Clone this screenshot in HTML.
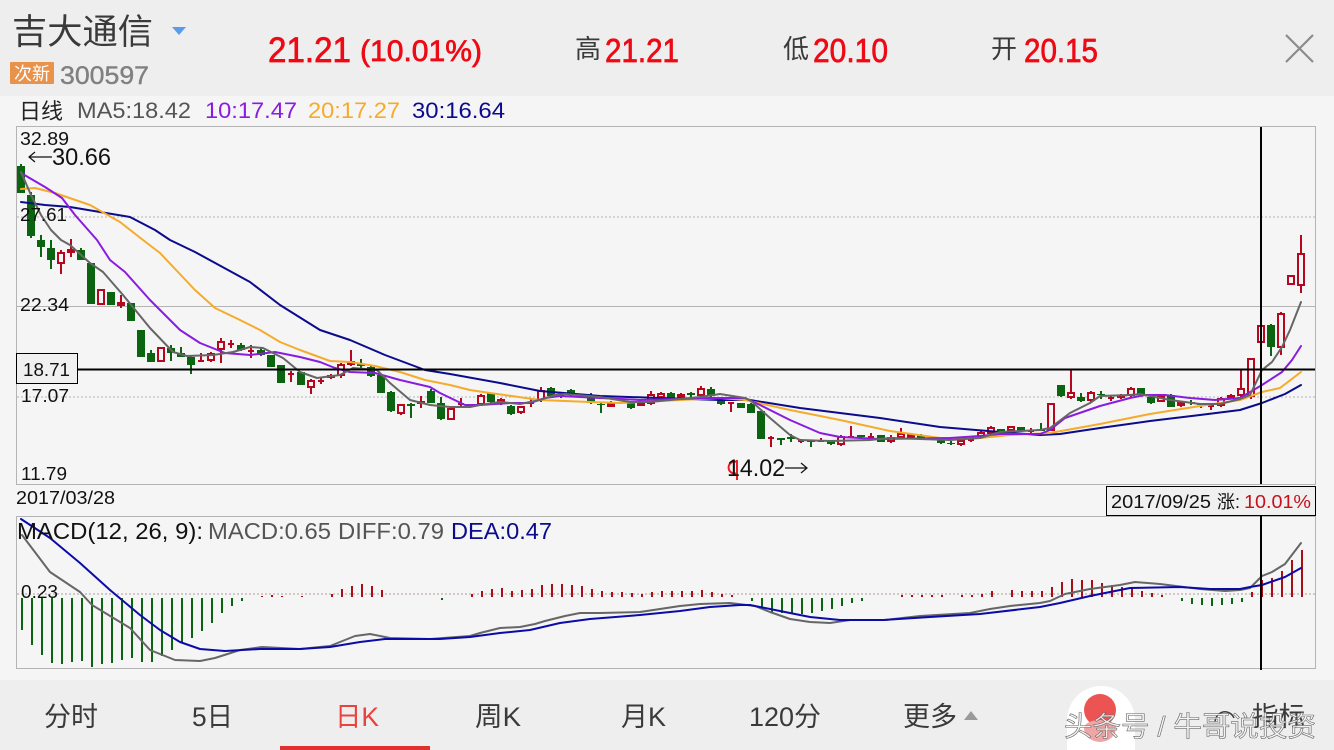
<!DOCTYPE html>
<html lang="zh"><head><meta charset="utf-8"><title>吉大通信</title>
<style>html,body{margin:0;padding:0;background:#f5f5f5;width:1334px;height:750px;overflow:hidden}svg{display:block}
text{font-family:"Liberation Sans","Noto Sans CJK SC",sans-serif}</style></head><body>
<svg width="1334" height="750" viewBox="0 0 1334 750" xmlns="http://www.w3.org/2000/svg">
<rect width="1334" height="750" fill="#f5f5f5"/>
<rect width="1334" height="96" fill="#eeeeee"/>
<rect y="680" width="1334" height="70" fill="#eeeeee"/>

<!-- header -->
<text x="12" y="44" font-size="35" fill="#3a3a3a" textLength="141" lengthAdjust="spacingAndGlyphs">吉大通信</text>
<path d="M172 27h14l-7 8z" fill="#5b9bec"/>
<rect x="10" y="62" width="44" height="22" rx="1" fill="#e8924a"/>
<text x="14" y="80" font-size="18" fill="#fff" textLength="36" lengthAdjust="spacingAndGlyphs">次新</text>
<text x="60" y="84" font-size="25" fill="#808080" stroke="#808080" stroke-width=".4" textLength="89" lengthAdjust="spacingAndGlyphs">300597</text>
<g fill="#ee0a14" stroke="#ee0a14" stroke-width=".7">
<text x="268" y="62" font-size="35" textLength="83" lengthAdjust="spacingAndGlyphs">21.21</text>
<text x="360" y="61" font-size="30" textLength="122" lengthAdjust="spacingAndGlyphs">(10.01%)</text>
<text x="605" y="62" font-size="33" textLength="74" lengthAdjust="spacingAndGlyphs">21.21</text>
<text x="813" y="62" font-size="33" textLength="75" lengthAdjust="spacingAndGlyphs">20.10</text>
<text x="1024" y="62" font-size="33" textLength="74" lengthAdjust="spacingAndGlyphs">20.15</text>
</g>
<g fill="#3a3a3a" font-size="26">
<text x="575" y="58">高</text><text x="783" y="58">低</text><text x="991" y="58">开</text>
</g>
<path d="M1286 35l27 27M1313 35l-27 27" stroke="#8c8c8c" stroke-width="2.2" fill="none"/>

<!-- MA legend -->
<text x="19" y="119" font-size="22" fill="#222" textLength="44" lengthAdjust="spacingAndGlyphs">日线</text>
<text x="77" y="118" font-size="22" fill="#555" textLength="114" lengthAdjust="spacingAndGlyphs">MA5:18.42</text>
<text x="205" y="118" font-size="22" fill="#8a1be0" textLength="92" lengthAdjust="spacingAndGlyphs">10:17.47</text>
<text x="308" y="118" font-size="22" fill="#f5ab2b" textLength="92" lengthAdjust="spacingAndGlyphs">20:17.27</text>
<text x="412" y="118" font-size="22" fill="#0b0b8c" textLength="93" lengthAdjust="spacingAndGlyphs">30:16.64</text>

<!-- chart boxes -->
<rect x="16.5" y="126.5" width="1299" height="358" fill="#f5f5f5" stroke="#b4b4b4"/>
<rect x="16.5" y="516.5" width="1299" height="152" fill="#f5f5f5" stroke="#b4b4b4"/>
<path d="M17 217H1315M17 397H1315" stroke="#b4b4b4" stroke-dasharray="2 2" fill="none"/>
<path d="M17 306.5H1315" stroke="#b4b4b4" fill="none"/>
<path d="M17 594H1315" stroke="#b09a9a" stroke-dasharray="2 2" fill="none"/>

<!-- green wicks -->
<path fill="none" stroke="#0b640f" stroke-width="2" d="M21 164V193M31 192V238M41 235V257M51 240V269M81 248V260M151 350V362M171 345V361M181 347V357M191 356V374M241 343V351M261 347V356M361 359V370M371 366V377M381 374V393M391 391V412M411 403V418M431 389V403M441 397V420M491 393V403M511 405V415M551 387V397M571 389V396M591 393V404M601 403V413M631 402V409M671 392V399M691 392V400M711 387V397M721 398V405M741 403V408M751 403V413M781 438V445M791 434V442M811 440V447M831 440V445M861 435V439M881 435V442M921 434V439M941 437V444M951 441V445M1001 429V434M1021 427V432M1041 423V431M1061 385V397M1081 393V402M1101 391V399M1141 388V396M1151 396V404M1171 394V407M1191 400V405M1201 403V408M1271 324V356"/>
<!-- green bodies -->
<path fill="#0b640f" d="M17 166h8V193h-8zM27 195h8V236h-8zM37 240h8V247h-8zM47 248h8V260h-8zM77 250h8V260h-8zM87 263h8V304h-8zM107 292h8V305h-8zM127 303h8V321h-8zM137 330h8V357h-8zM147 353h8V362h-8zM167 348h8V353h-8zM177 353h8V357h-8zM187 357h8V365h-8zM237 345h8V350h-8zM257 350h8V355h-8zM267 355h8V367h-8zM277 365h8V383h-8zM297 372h8V385h-8zM357 364h8V366h-8zM367 367h8V376h-8zM377 375h8V393h-8zM387 392h8V411h-8zM407 404h8V406h-8zM427 391h8V403h-8zM437 403h8V419h-8zM487 393h8V402h-8zM507 406h8V414h-8zM547 388h8V396h-8zM567 390h8V395h-8zM587 396h8V403h-8zM597 404h8V405h-8zM627 403h8V408h-8zM667 393h8V398h-8zM687 393h8V395h-8zM707 389h8V396h-8zM717 398h8V404h-8zM737 403h8V408h-8zM747 404h8V413h-8zM757 411h8V439h-8zM777 438h8V440h-8zM787 437h8V439h-8zM807 440h8V442h-8zM827 441h8V444h-8zM857 435h8V437h-8zM877 435h8V442h-8zM917 435h8V438h-8zM937 437h8V443h-8zM947 443h8V444h-8zM997 429h8V433h-8zM1017 427h8V431h-8zM1037 429h8V431h-8zM1057 385h8V396h-8zM1077 397h8V401h-8zM1097 394h8V395h-8zM1137 388h8V395h-8zM1147 397h8V403h-8zM1167 395h8V407h-8zM1187 402h8V403h-8zM1197 404h8V405h-8zM1267 325h8V347h-8z"/>
<!-- red wicks -->
<path fill="none" stroke="#b7071f" stroke-width="2" d="M61 250V274M71 239V257M121 295V308M201 353V362M211 352V362M221 338V363M231 340V348M251 345V358M291 371V382M311 379V394M321 378V384M331 374V379M341 363V378M351 350V366M401 404V415M421 396V408M461 398V406M481 394V406M501 398V405M521 406V414M531 398V407M541 387V402M561 393V398M611 401V407M641 403V406M651 391V405M661 392V399M681 393V398M701 386V397M731 402V412M771 436V447M801 439V443M821 438V442M841 435V446M851 426V438M871 433V438M891 435V443M901 428V439M911 433V439M961 439V446M971 437V442M981 431V438M991 426V435M1011 426V432M1031 428V434M1071 370V399M1091 391V402M1111 395V401M1121 394V399M1131 387V397M1181 402V407M1211 403V410M1221 397V407M1231 394V399M1241 370V397M1251 358V399M1281 312V355M1301 235V293"/>
<!-- red bodies -->
<path fill="#f5f5f5" stroke="#b7071f" stroke-width="2" d="M58 253h6V263h-6zM68 250h6V252h-6zM98 290h6V304h-6zM118 303h6V305h-6zM158 348h6V361h-6zM198 361h6zM208 354h6V360h-6zM218 342h6V349h-6zM228 344h6zM248 351h6zM288 374h6zM308 381h6V387h-6zM318 381h6zM328 376h6V377h-6zM338 365h6V375h-6zM348 362h6V364h-6zM398 405h6V413h-6zM418 402h6V403h-6zM448 409h6V419h-6zM458 404h6zM478 396h6V404h-6zM498 400h6V402h-6zM518 407h6V412h-6zM528 403h6zM538 391h6V400h-6zM558 396h6zM608 404h6V406h-6zM638 404h6V405h-6zM648 395h6V403h-6zM658 394h6V397h-6zM678 395h6V397h-6zM698 389h6V395h-6zM728 403h6zM768 438h6zM798 441h6zM818 441h6zM838 437h6V444h-6zM848 437h6zM868 437h6zM888 438h6V441h-6zM898 434h6V437h-6zM908 435h6V437h-6zM958 441h6V444h-6zM968 440h6zM978 433h6V436h-6zM988 428h6V433h-6zM1008 427h6V430h-6zM1028 431h6zM1048 404h6V430h-6zM1068 393h6V397h-6zM1088 393h6V400h-6zM1108 398h6zM1118 396h6V397h-6zM1128 389h6V395h-6zM1158 397h6V401h-6zM1178 403h6V405h-6zM1208 406h6zM1218 399h6V405h-6zM1228 396h6V398h-6zM1238 389h6V395h-6zM1248 359h6V396h-6zM1258 326h6V342h-6zM1278 314h6V347h-6zM1288 276h6V284h-6zM1298 254h6V285h-6z"/>

<!-- MA lines -->
<g fill="none" stroke-width="2" stroke-linejoin="round" stroke-linecap="round">
<polyline stroke="#0b0b8c" points="21,202 45,205 70,207 100,212 130,217 155,230 170,240 195,252 250,282 280,305 320,330 350,340 385,355 425,370 450,374 500,383 540,391 600,396 660,398 720,400 750,400 800,408 880,418 940,427 1000,432 1040,435 1060,434 1100,428 1150,421 1200,415 1240,410 1262,403 1285,394 1301,385"/>
<polyline stroke="#f5ab2b" points="21,189 35,188 55,193 90,205 120,222 143,240 160,253 195,290 215,308 240,320 260,330 280,342 300,350 330,361 350,362 375,366 400,372 425,380 450,385 470,390 490,393 540,400 590,402 620,403 660,401 720,398 745,400 790,410 840,420 890,431 940,438 980,438 1010,435 1050,433 1100,424 1150,414 1200,406 1240,400 1262,392 1280,388 1301,372"/>
<polyline stroke="#8a1be0" points="21,173 45,187 62,198 75,215 97,240 110,260 125,272 150,300 180,330 200,343 225,353 250,355 275,352 300,357 320,362 335,368 350,372 375,373 400,380 430,387 440,393 465,405 480,405 495,404 510,403 530,403 545,398 560,396 600,398 640,400 680,399 710,398 745,398 760,405 790,420 820,433 840,437 880,439 950,438 980,436 1000,434 1040,434 1050,430 1065,418 1100,406 1130,398 1145,395 1165,395 1190,398 1215,400 1240,398 1262,385 1282,372 1292,360 1301,346"/>
<polyline stroke="#666" points="21,172 31,195 41,215 51,230 61,240 70,245 90,263 103,272 123,295 150,328 173,352 187,356 213,355 233,352 250,347 263,348 283,358 300,372 317,378 340,375 353,368 377,370 390,383 410,400 430,405 450,407 470,407 480,405 500,402 520,404 540,400 555,395 565,394 600,397 630,402 650,402 670,400 700,397 720,394 745,398 750,400 770,418 790,435 800,440 830,441 870,440 890,438 950,440 980,438 1000,432 1040,430 1050,428 1070,413 1090,403 1100,396 1130,395 1140,394 1170,400 1200,404 1220,404 1240,399 1250,395 1262,370 1272,362 1282,347 1290,330 1301,302"/>
</g>

<!-- MACD bars -->
<path fill="none" stroke="#0b640f" stroke-width="2" d="M22 598V630M32 598V645M42 598V655M52 598V663M62 598V664M72 598V662M82 598V661M92 598V667M102 598V664M112 598V663M122 598V660M132 598V658M142 598V662M152 598V662M162 598V656M172 598V650M182 598V643M192 598V638M202 598V631M212 598V623M222 598V613M232 598V606M242 598V601M442 598V600M752 598V601M762 598V607M772 598V612M782 598V613M792 598V614M802 598V614M812 598V613M822 598V611M832 598V609M842 598V606M852 598V603M862 598V601M1182 598V601M1192 598V604M1202 598V605M1212 598V606M1222 598V605M1232 598V604M1242 598V602"/>
<path fill="none" stroke="#a80f14" stroke-width="2" d="M262 597V596M272 597V595M282 597V596M302 597V596M332 597V594M342 597V589M352 597V586M362 597V584M372 597V586M382 597V590M472 597V594M482 597V591M492 597V589M502 597V588M512 597V591M522 597V590M532 597V589M542 597V585M552 597V584M562 597V584M572 597V585M582 597V586M592 597V589M602 597V591M612 597V592M622 597V592M632 597V593M642 597V594M652 597V592M662 597V591M672 597V591M682 597V591M692 597V591M702 597V590M712 597V592M722 597V594M732 597V595M902 597V595M912 597V595M922 597V595M932 597V595M942 597V595M962 597V595M972 597V595M982 597V594M992 597V591M1012 597V590M1022 597V591M1032 597V591M1042 597V591M1052 597V587M1062 597V582M1072 597V579M1082 597V580M1092 597V580M1102 597V583M1112 597V585M1122 597V587M1132 597V588M1142 597V591M1152 597V593M1162 597V595M1252 597V592M1262 597V580M1272 597V578M1282 597V571M1292 597V560M1302 597V550"/>
<g fill="none" stroke-width="2" stroke-linejoin="round" stroke-linecap="round">
<polyline stroke="#666" points="22,535 50,572 80,592 92,605 130,628 150,650 175,660 200,661 215,658 240,650 262,647 300,649 330,646 355,636 370,634 390,638 430,639 470,636 480,633 500,628 520,627 535,624 545,621 565,616 580,613 600,613 640,612 660,609 680,606 700,604 730,603 755,606 770,612 790,619 810,622 830,623 850,620 884,620 920,616 970,613 990,609 1010,606 1040,603 1050,601 1065,594 1090,589 1120,585 1135,582 1160,584 1200,589 1225,591 1240,590 1250,588 1262,576 1272,572 1285,564 1301,543"/>
<polyline stroke="#0b0baa" points="21,519 50,538 80,563 110,590 140,615 160,630 180,642 200,649 225,651 260,649 300,649 330,647 360,642 385,639 420,639 440,639 470,637 500,633 530,630 560,623 590,619 640,615 680,611 710,607 740,605 750,605 780,611 810,617 840,620 884,620 930,617 980,614 1040,607 1060,603 1090,596 1130,588 1180,587 1210,589 1240,589 1250,587 1262,585 1285,577 1301,568"/>
</g>

<!-- crosshair -->
<path d="M77 369.5H1315" stroke="#000" stroke-width="2"/>
<path d="M1261 127V484M1261 516V670" stroke="#000" stroke-width="2"/>
<rect x="16.5" y="353.5" width="61" height="30" fill="#f0f0f0" stroke="#000"/>
<text x="23" y="376" font-size="18" fill="#111" textLength="47" lengthAdjust="spacingAndGlyphs">18.71</text>
<rect x="1106.5" y="486.5" width="209" height="29" fill="#f0f0f0" stroke="#000"/>
<text x="1111" y="508" font-size="18" fill="#111" textLength="100" lengthAdjust="spacingAndGlyphs">2017/09/25</text>
<text x="1217" y="508" font-size="18" fill="#111">涨:</text>
<text x="1244" y="508" font-size="18" fill="#c8101a" textLength="67" lengthAdjust="spacingAndGlyphs">10.01%</text>

<!-- chart labels -->
<g fill="#111" font-size="18">
<text x="20" y="145" textLength="49" lengthAdjust="spacingAndGlyphs">32.89</text>
<text x="20" y="221" textLength="47" lengthAdjust="spacingAndGlyphs">27.61</text>
<text x="20" y="311" textLength="49" lengthAdjust="spacingAndGlyphs">22.34</text>
<text x="21" y="402" textLength="48" lengthAdjust="spacingAndGlyphs">17.07</text>
<text x="21" y="480" textLength="46" lengthAdjust="spacingAndGlyphs">11.79</text>
<text x="16" y="504" textLength="99" lengthAdjust="spacingAndGlyphs">2017/03/28</text>
<text x="21" y="598" textLength="37" lengthAdjust="spacingAndGlyphs">0.23</text>
</g>
<text x="52" y="165" font-size="24" fill="#111" textLength="59" lengthAdjust="spacingAndGlyphs">30.66</text>
<path d="M52 157H29M35 152l-6 5 6 5" fill="none" stroke="#111" stroke-width="1.2"/>
<path d="M737 460V480M737 462a6 6 0 1 0 0 11" fill="none" stroke="#ee1c24" stroke-width="2"/>
<text x="727" y="476" font-size="24" fill="#111" textLength="58" lengthAdjust="spacingAndGlyphs">14.02</text>
<path d="M785 468H807M801 463l6 5-6 5" fill="none" stroke="#111" stroke-width="1.2"/>

<!-- MACD legend -->
<text x="17" y="539" font-size="23" fill="#111" textLength="186" lengthAdjust="spacingAndGlyphs">MACD(12, 26, 9):</text>
<text x="208" y="539" font-size="23" fill="#555" textLength="123" lengthAdjust="spacingAndGlyphs">MACD:0.65</text>
<text x="338" y="539" font-size="23" fill="#555" textLength="106" lengthAdjust="spacingAndGlyphs">DIFF:0.79</text>
<text x="451" y="539" font-size="23" fill="#0b0b8c" textLength="101" lengthAdjust="spacingAndGlyphs">DEA:0.47</text>

<!-- bottom nav -->
<g font-size="27" fill="#3a3a3a">
<text x="44" y="726" textLength="54" lengthAdjust="spacingAndGlyphs">分时</text>
<text x="192" y="726" textLength="41" lengthAdjust="spacingAndGlyphs">5日</text>
<text x="335" y="726" fill="#e8433e" textLength="44" lengthAdjust="spacingAndGlyphs">日K</text>
<text x="475" y="726" textLength="46" lengthAdjust="spacingAndGlyphs">周K</text>
<text x="621" y="726" textLength="45" lengthAdjust="spacingAndGlyphs">月K</text>
<text x="749" y="726" textLength="72" lengthAdjust="spacingAndGlyphs">120分</text>
<text x="903" y="726" textLength="54" lengthAdjust="spacingAndGlyphs">更多</text>
<text x="1252" y="726" textLength="53" lengthAdjust="spacingAndGlyphs">指标</text>
</g>
<path d="M964 720l7-9 7 9z" fill="#9a9a9a"/>
<rect x="280" y="746" width="150" height="4" fill="#e03030"/>
<path d="M1067 750V720a34 34 0 0 1 68 0V750z" fill="#fff"/>
<circle cx="1100" cy="710" r="16" fill="#ec5454"/>
<path d="M1084 728a16 14 0 0 0 32 0a16 8 0 0 0 -32 0z" fill="#f0a5a5"/>
<path d="M1215 722a10 11 0 0 1 19 -4" fill="none" stroke="#3a3a3a" stroke-width="1.5"/>
<text x="1064" y="736" font-size="28" fill="#f4f4f4" fill-opacity=".85" stroke="#666" stroke-width=".6" textLength="252" lengthAdjust="spacingAndGlyphs">头条号 / 牛哥说投资</text>
</svg>
</body></html>
